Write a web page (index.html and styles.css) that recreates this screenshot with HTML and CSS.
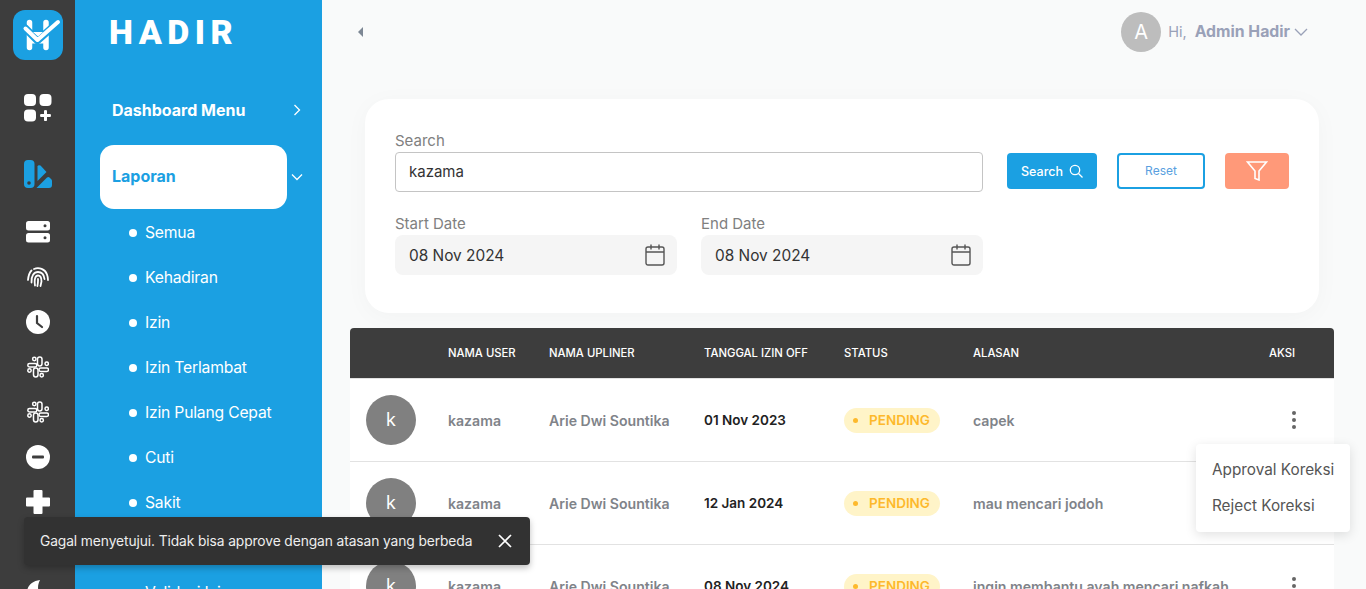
FILE: index.html
```html
<!DOCTYPE html>
<html lang="en">
<head>
  <meta charset="UTF-8">
  <meta name="viewport" content="width=device-width, initial-scale=1.0">
  <title>Hadir - Laporan</title>
  <link rel="stylesheet" href="styles.css">
</head>
<body>
  <div class="app">
    <!-- icon rail -->
    <nav class="rail">
      <div class="rail-logo">
        <svg width="50" height="50" viewBox="0 0 50 50" fill="none" stroke-linecap="round" stroke-linejoin="round">
          <path d="M16.500 12.500v25M33 12.500v25" stroke="#fff" stroke-width="5.500"/>
          <path d="M16 31.500h17" stroke="#fff" stroke-width="4"/>
          <path d="M12 18l12.500 12.500L46 11.500" stroke="#1ba0e2" stroke-width="7.500"/>
          <path d="M12.500 18.500l12 11.500L45 12" stroke="#fff" stroke-width="4"/>
          <path d="M20 22h10l-5 4.500z" fill="#fff"/>
        </svg>
      </div>
      <div class="rail-item rail-first">
        <svg width="28" height="28" viewBox="0 0 28 28" fill="#fff">
          <rect width="12" height="12" rx="4"/>
          <rect x="15.500" width="12" height="12" rx="4"/>
          <rect y="15.500" width="12" height="12" rx="4"/>
          <path d="M20 16.500q1.500-1 3 0v3.500h3.500q1 1.500 0 3H23v3.500q-1.500 1-3 0V23h-3.500q-1-1.500 0-3H20z"/>
        </svg>
      </div>
      <div class="rail-item rail-second">
        <svg width="28" height="28" viewBox="0 0 28 28" fill="#1ba0e2">
          <path d="M4 0h2.500a4 4 0 0 1 4 4v20a4 4 0 0 1-4 4H4a4 4 0 0 1-4-4V4a4 4 0 0 1 4-4z"/>
          <circle cx="5" cy="23" r="1.800" fill="#3d3d3d"/>
          <path d="M13.500 6.500q.5-2 3-1L22.500 12 13.500 21z"/>
          <path d="M12.500 28L23 17.500q1.500-1 2.500 0l2 2q.5.500.500 1.500v4a3 3 0 0 1-3 3z"/>
        </svg>
      </div>
      <div class="rail-group">
        <div class="rail-item">
          <svg width="24" height="22" viewBox="0 0 24 22" fill="#fff">
            <rect width="24" height="9.500" rx="2.500"/>
            <rect y="12" width="24" height="9.500" rx="2.500"/>
            <circle cx="19" cy="4.700" r="1.500" fill="#3d3d3d"/>
            <circle cx="19" cy="16.700" r="1.500" fill="#3d3d3d"/>
          </svg>
        </div>
        <div class="rail-item">
          <svg width="22" height="20" viewBox="0 0 22 20" fill="none" stroke="#fff" stroke-width="1.800" stroke-linecap="round">
            <path d="M1 13C1.500 8 2.500 5.500 4.500 3.500M7 2C12 0 18 2 20 7.500 20.700 9.500 21 11 21 13"/>
            <path d="M4.500 15.500C4 9 7 5 11 5c3.500 0 6 2.500 6.500 7"/>
            <path d="M8 18.500C7 12 8.500 8.500 11 8.500s3.500 3 3.500 6L13.500 19"/>
            <path d="M11 12c.2 3-.2 5-.6 7"/>
          </svg>
        </div>
        <div class="rail-item">
          <svg width="24" height="24" viewBox="0 0 24 24">
            <circle cx="12" cy="12" r="12" fill="#fff"/>
            <path d="M11 6v7l5 4" fill="none" stroke="#3d3d3d" stroke-width="2.200" stroke-linecap="round"/>
          </svg>
        </div>
        <div class="rail-item">
          <svg width="22" height="22" viewBox="0 0 22 22" fill="none" stroke="#fff" stroke-width="1.500">
            <rect x="10.500" y="1" width="4.500" height="9" rx="2.200"/>
            <circle cx="7.300" cy="3" r="1.700"/>
            <rect x="0.800" y="7.500" width="9" height="3.500" rx="1.700"/>
            <circle cx="19.700" cy="7.700" r="1.700"/>
            <rect x="12" y="12" width="9.500" height="3.500" rx="1.700"/>
            <circle cx="2.500" cy="14.500" r="1.700"/>
            <rect x="6.500" y="12" width="4.500" height="9" rx="2.200"/>
            <circle cx="14.700" cy="19.300" r="1.700"/>
          </svg>
        </div>
        <div class="rail-item">
          <svg width="22" height="22" viewBox="0 0 22 22" fill="none" stroke="#fff" stroke-width="1.500">
            <rect x="10.500" y="1" width="4.500" height="9" rx="2.200"/>
            <circle cx="7.300" cy="3" r="1.700"/>
            <rect x="0.800" y="7.500" width="9" height="3.500" rx="1.700"/>
            <circle cx="19.700" cy="7.700" r="1.700"/>
            <rect x="12" y="12" width="9.500" height="3.500" rx="1.700"/>
            <circle cx="2.500" cy="14.500" r="1.700"/>
            <rect x="6.500" y="12" width="4.500" height="9" rx="2.200"/>
            <circle cx="14.700" cy="19.300" r="1.700"/>
          </svg>
        </div>
        <div class="rail-item">
          <svg width="24" height="24" viewBox="0 0 24 24">
            <circle cx="12" cy="12" r="12" fill="#fff"/>
            <rect x="6" y="10.500" width="12" height="3" rx="1" fill="#3d3d3d"/>
          </svg>
        </div>
        <div class="rail-item">
          <svg width="24" height="24" viewBox="0 0 24 24" fill="#fff">
            <path d="M7.500 1q0-1 1-1h7q1 0 1 1v6.500H23q1 0 1 1v7q0 1-1 1h-6.500V23q0 1-1 1h-7q-1 0-1-1v-6.500H1q-1 0-1-1v-7q0-1 1-1h6.500z"/>
          </svg>
        </div>
        <div class="rail-item"></div>
        <div class="rail-item">
          <svg width="24" height="24" viewBox="0 0 24 24" fill="#fff">
            <path d="M14 0C6 1 1 6 1 12.500 1 19 6 24 12.500 24 19 24 23 20 24 15 17 19 8 12 14 0z"/>
          </svg>
        </div>
      </div>
    </nav>

    <!-- menu sidebar -->
    <aside class="sidebar">
      <div class="brand">HADIR</div>
      <a class="menu-link">
        <span>Dashboard Menu</span>
        <svg class="chevron" width="8" height="12" viewBox="0 0 8 12" fill="none" stroke="#fff" stroke-width="1.300"><path d="M1.500 1l5 5-5 5"/></svg>
      </a>
      <div class="menu-open">
        <a class="menu-pill">Laporan</a>
        <svg class="chevron-down" width="12" height="8" viewBox="0 0 12 8" fill="none" stroke="#fff" stroke-width="1.300"><path d="M1 1.500l5 5 5-5"/></svg>
      </div>
      <ul class="submenu">
        <li>Semua</li>
        <li>Kehadiran</li>
        <li>Izin</li>
        <li>Izin Terlambat</li>
        <li>Izin Pulang Cepat</li>
        <li>Cuti</li>
        <li>Sakit</li>
        <li>Lembur</li>
        <li>Validasi Izin</li>
      </ul>
    </aside>

    <main class="main">
      <header class="topbar">
        <span class="collapse-arrow"></span>
        <div class="user">
          <span class="user-avatar">A</span>
          <span class="user-hi">Hi,</span>
          <span class="user-name">Admin Hadir</span>
          <svg width="14" height="8" viewBox="0 0 14 8" fill="none" stroke="#9aa1b8" stroke-width="1.300"><path d="M1 1l6 6 6-6"/></svg>
        </div>
      </header>

      <section class="filter-card">
        <div class="filter-row">
          <div class="field field-search">
            <label>Search</label>
            <div class="input">kazama</div>
          </div>
          <div class="filter-actions">
            <button class="btn btn-search">
              Search
              <svg width="14" height="14" viewBox="0 0 14 14" fill="none" stroke="#fff" stroke-width="1.300"><circle cx="6" cy="6" r="4.700"/><path d="M9.500 9.500l4 4"/></svg>
            </button>
            <button class="btn btn-reset">Reset</button>
            <button class="btn btn-filter">
              <svg width="22" height="20" viewBox="0 0 22 20" fill="none" stroke="#fff" stroke-width="1.600"><path d="M1.500 1h19l-7.500 9v9l-4-1.500V10z"/></svg>
            </button>
          </div>
        </div>
        <div class="date-row">
          <div class="field field-date">
            <label>Start Date</label>
            <div class="input input-date">
              <span>08 Nov 2024</span>
              <svg width="20" height="22" viewBox="0 0 20 22" fill="none" stroke="#555" stroke-width="1.400"><rect x="1" y="3" width="18" height="18" rx="2"/><path d="M1 8h18M6 0.500v5M14 0.500v5"/></svg>
            </div>
          </div>
          <div class="field field-date">
            <label>End Date</label>
            <div class="input input-date">
              <span>08 Nov 2024</span>
              <svg width="20" height="22" viewBox="0 0 20 22" fill="none" stroke="#555" stroke-width="1.400"><rect x="1" y="3" width="18" height="18" rx="2"/><path d="M1 8h18M6 0.500v5M14 0.500v5"/></svg>
            </div>
          </div>
        </div>
      </section>

      <section class="table">
        <div class="table-head">
          <span></span>
          <span>NAMA USER</span>
          <span>NAMA UPLINER</span>
          <span>TANGGAL IZIN OFF</span>
          <span>STATUS</span>
          <span>ALASAN</span>
          <span>AKSI</span>
        </div>
        <div class="table-row">
          <span class="avatar">k</span>
          <span class="cell-muted">kazama</span>
          <span class="cell-muted">Arie Dwi Sountika</span>
          <span class="cell-date">01 Nov 2023</span>
          <span><span class="badge">PENDING</span></span>
          <span class="cell-muted">capek</span>
          <span class="dots"><i></i><i></i><i></i></span>
        </div>
        <div class="table-row">
          <span class="avatar">k</span>
          <span class="cell-muted">kazama</span>
          <span class="cell-muted">Arie Dwi Sountika</span>
          <span class="cell-date">12 Jan 2024</span>
          <span><span class="badge">PENDING</span></span>
          <span class="cell-muted">mau mencari jodoh</span>
          <span></span>
        </div>
        <div class="table-row">
          <span class="avatar">k</span>
          <span class="cell-muted">kazama</span>
          <span class="cell-muted">Arie Dwi Sountika</span>
          <span class="cell-date">08 Nov 2024</span>
          <span><span class="badge">PENDING</span></span>
          <span class="cell-muted">ingin membantu ayah mencari nafkah</span>
          <span class="dots"><i></i><i></i><i></i></span>
        </div>
      </section>
    </main>
  </div>

  <!-- row action menu, open on the first row -->
  <div class="row-menu">
    <a>Approval Koreksi</a>
    <a>Reject Koreksi</a>
  </div>

  <div class="toast">
    <span>Gagal menyetujui. Tidak bisa approve dengan atasan yang berbeda</span>
    <svg width="14" height="14" viewBox="0 0 14 14" fill="none" stroke="#fff" stroke-width="1.700"><path d="M1 1l12 12M13 1L1 13"/></svg>
  </div>
</body>
</html>
```

FILE: styles.css
```css
/* General Styling */
body {
  font-family: 'Inter', 'Liberation Sans', sans-serif;
  background: #f9fafa;
  color: #333;
  margin: 0;
  height: 100vh;
  overflow: hidden;
}

.app {
  display: flex;
  height: 100vh;
  overflow: hidden;
}

/* Icon rail */
.rail {
  width: 75px;
  flex: none;
  background: #3d3d3d;
  display: flex;
  flex-direction: column;
  align-items: center;
  padding-top: 10px;
}

.rail-logo {
  width: 50px;
  height: 50px;
  flex: none;
  border-radius: 12px;
  background: #1ba0e2;
}

.rail-item {
  height: 45px;
  flex: none;
  display: flex;
  align-items: center;
  justify-content: center;
}

.rail-first {
  margin-top: 25px;
}

.rail-second {
  margin-top: 21px;
}

.rail-group {
  margin-top: 13px;
}

/* Menu sidebar */
.sidebar {
  width: 247px;
  flex: none;
  background: #1ba0e2;
  color: #fff;
  padding: 0 25px;
  box-sizing: border-box;
}

.brand {
  font-family: 'Roboto', sans-serif;
  font-weight: 900;
  font-size: 34px;
  line-height: 40px;
  letter-spacing: 5.500px;
  margin: 12px 0 0 9px;
}

.menu-link {
  display: flex;
  align-items: center;
  justify-content: space-between;
  height: 40px;
  margin-top: 38px;
  padding-left: 12px;
  font-size: 16px;
  font-weight: 700;
}

.chevron {
  margin-right: -4px;
}

.menu-open {
  display: flex;
  align-items: center;
  margin-top: 15px;
}

.menu-pill {
  width: 187px;
  height: 64px;
  flex: none;
  box-sizing: border-box;
  padding-left: 12px;
  background: #fff;
  border-radius: 14px;
  color: #1ba0e2;
  font-size: 16px;
  font-weight: 700;
  line-height: 63px;
}

.chevron-down {
  flex: none;
  margin-left: 4px;
}

.submenu {
  list-style: none;
  margin: 1px 0 0;
  padding: 0 0 0 45px;
}

.submenu li {
  position: relative;
  height: 45px;
  line-height: 45px;
  font-size: 15.700px;
  letter-spacing: -0.2px;
}

.submenu li::before {
  content: "";
  position: absolute;
  left: -16px;
  top: 19px;
  width: 8px;
  height: 8px;
  border-radius: 50%;
  background: #fff;
}

/* Main column */
.main {
  flex: 1;
  min-width: 0;
  padding: 0 32px 0 28px;
}

.topbar {
  height: 64px;
  display: flex;
  align-items: center;
  justify-content: space-between;
  padding: 0 26px 0 8px;
}

.collapse-arrow {
  width: 0;
  height: 0;
  border-top: 5px solid transparent;
  border-bottom: 5px solid transparent;
  border-right: 5px solid #7d8794;
}

.user {
  display: flex;
  align-items: center;
  font-size: 14.500px;
  line-height: 38px;
  color: #9aa1b8;
}

.user-avatar {
  width: 40px;
  height: 40px;
  border-radius: 50%;
  background: #bdbdbd;
  color: #fff;
  font-size: 20px;
  line-height: 40px;
  text-align: center;
  margin-right: 7px;
}

.user-hi {
  margin-right: 8px;
}

.user-name {
  font-weight: 700;
  font-size: 15.800px;
  margin-right: 4px;
  white-space: nowrap;
}

/* Filter card */
.filter-card {
  margin: 35px 15px 0;
  padding: 32px 30px 38px;
  background: #fff;
  border-radius: 24px;
  box-shadow: 0 4px 24px rgba(0, 0, 0, 0.03);
}

.filter-row {
  display: flex;
  gap: 24px;
}

.field label {
  display: block;
  font-size: 15px;
  line-height: 20px;
  color: #808080;
}

.field-search {
  width: 588px;
}

.input {
  height: 40px;
  margin-top: 1px;
  box-sizing: border-box;
  padding: 0 13px;
  border: 1px solid #c4c4c4;
  border-radius: 4px;
  font-size: 15px;
  line-height: 38px;
  color: #333;
}

.filter-actions {
  display: flex;
  gap: 20px;
  align-self: flex-end;
  margin-bottom: 3px;
}

.btn {
  height: 36px;
  box-sizing: border-box;
  border: none;
  border-radius: 4px;
  font-family: inherit;
  font-size: 12.500px;
  display: flex;
  align-items: center;
  justify-content: center;
  gap: 6px;
}

.btn-search {
  width: 90px;
  background: #1ba0e2;
  color: #fff;
  font-weight: 500;
}

.btn-reset {
  width: 88px;
  padding-bottom: 2px;
  background: #fff;
  border: 2px solid #1ba0e2;
  color: #5a9fe0;
  font-size: 12px;
}

.btn-filter {
  width: 64px;
  background: #ff9979;
}

.date-row {
  display: flex;
  gap: 24px;
  margin-top: 22px;
}

.field-date {
  width: 282px;
}

.input-date {
  display: flex;
  align-items: center;
  justify-content: space-between;
  margin-top: 1px;
  padding: 0 12px 0 14px;
  border: none;
  border-radius: 8px;
  background: #f5f5f5;
  font-size: 15.400px;
}

.input-date span {
  padding-top: 2px;
}

/* Table */
.table {
  margin-top: 15px;
}

.table-head,
.table-row {
  display: grid;
  grid-template-columns: 98px 101px 155px 140px 129px 296px 65px;
  align-items: center;
}

.table-head {
  height: 51px;
  box-sizing: border-box;
  background: #3d3d3d;
  border-bottom: 1px solid #e2e2e2;
  border-radius: 4px 4px 0 0;
  color: #fff;
  font-size: 11.300px;
  font-weight: 500;
}

.table-row {
  height: 83px;
  box-sizing: border-box;
  background: #fff;
  border-bottom: 1px solid #e2e2e2;
  font-size: 14.100px;
  font-weight: 600;
}

.avatar {
  width: 50px;
  height: 50px;
  margin-left: 16px;
  border-radius: 50%;
  background: #808080;
  color: #fff;
  font-size: 18px;
  font-weight: 400;
  line-height: 50px;
  text-align: center;
}

.cell-muted {
  color: #808389;
  white-space: nowrap;
}

.cell-date {
  color: #222;
  font-size: 13.500px;
}

.badge {
  display: inline-block;
  position: relative;
  height: 25px;
  box-sizing: border-box;
  padding-left: 25px;
  width: 96px;
  border-radius: 13px;
  background: #fff4c8;
  color: #fdb92c;
  font-size: 13.500px;
  line-height: 25px;
}

.badge::before {
  content: "";
  position: absolute;
  left: 9px;
  top: 10px;
  width: 5px;
  height: 5px;
  border-radius: 50%;
  background: #fdb92c;
}

.dots {
  display: flex;
  flex-direction: column;
  gap: 3px;
  align-items: flex-start;
  padding-left: 23px;
}

.dots i {
  width: 4px;
  height: 4px;
  border-radius: 50%;
  background: #666;
}

/* Row action menu */
.row-menu {
  position: absolute;
  left: 1196px;
  top: 444px;
  width: 154px;
  height: 88px;
  box-sizing: border-box;
  padding: 8px 16px;
  background: #fff;
  border-radius: 4px;
  box-shadow: 0 3px 12px rgba(0, 0, 0, 0.12);
  font-size: 15.300px;
  color: #555;
}

.row-menu a {
  display: block;
  height: 36px;
  line-height: 36px;
  white-space: nowrap;
}

/* Toast */
.toast {
  position: absolute;
  left: 24px;
  top: 517px;
  width: 506px;
  height: 48px;
  box-sizing: border-box;
  padding: 0 18px 0 16px;
  display: flex;
  align-items: center;
  justify-content: space-between;
  background: #323232;
  border-radius: 4px;
  box-shadow: 0 3px 6px rgba(0, 0, 0, 0.25);
  color: #eee;
  font-size: 13.800px;
  letter-spacing: -0.1px;
}
```
